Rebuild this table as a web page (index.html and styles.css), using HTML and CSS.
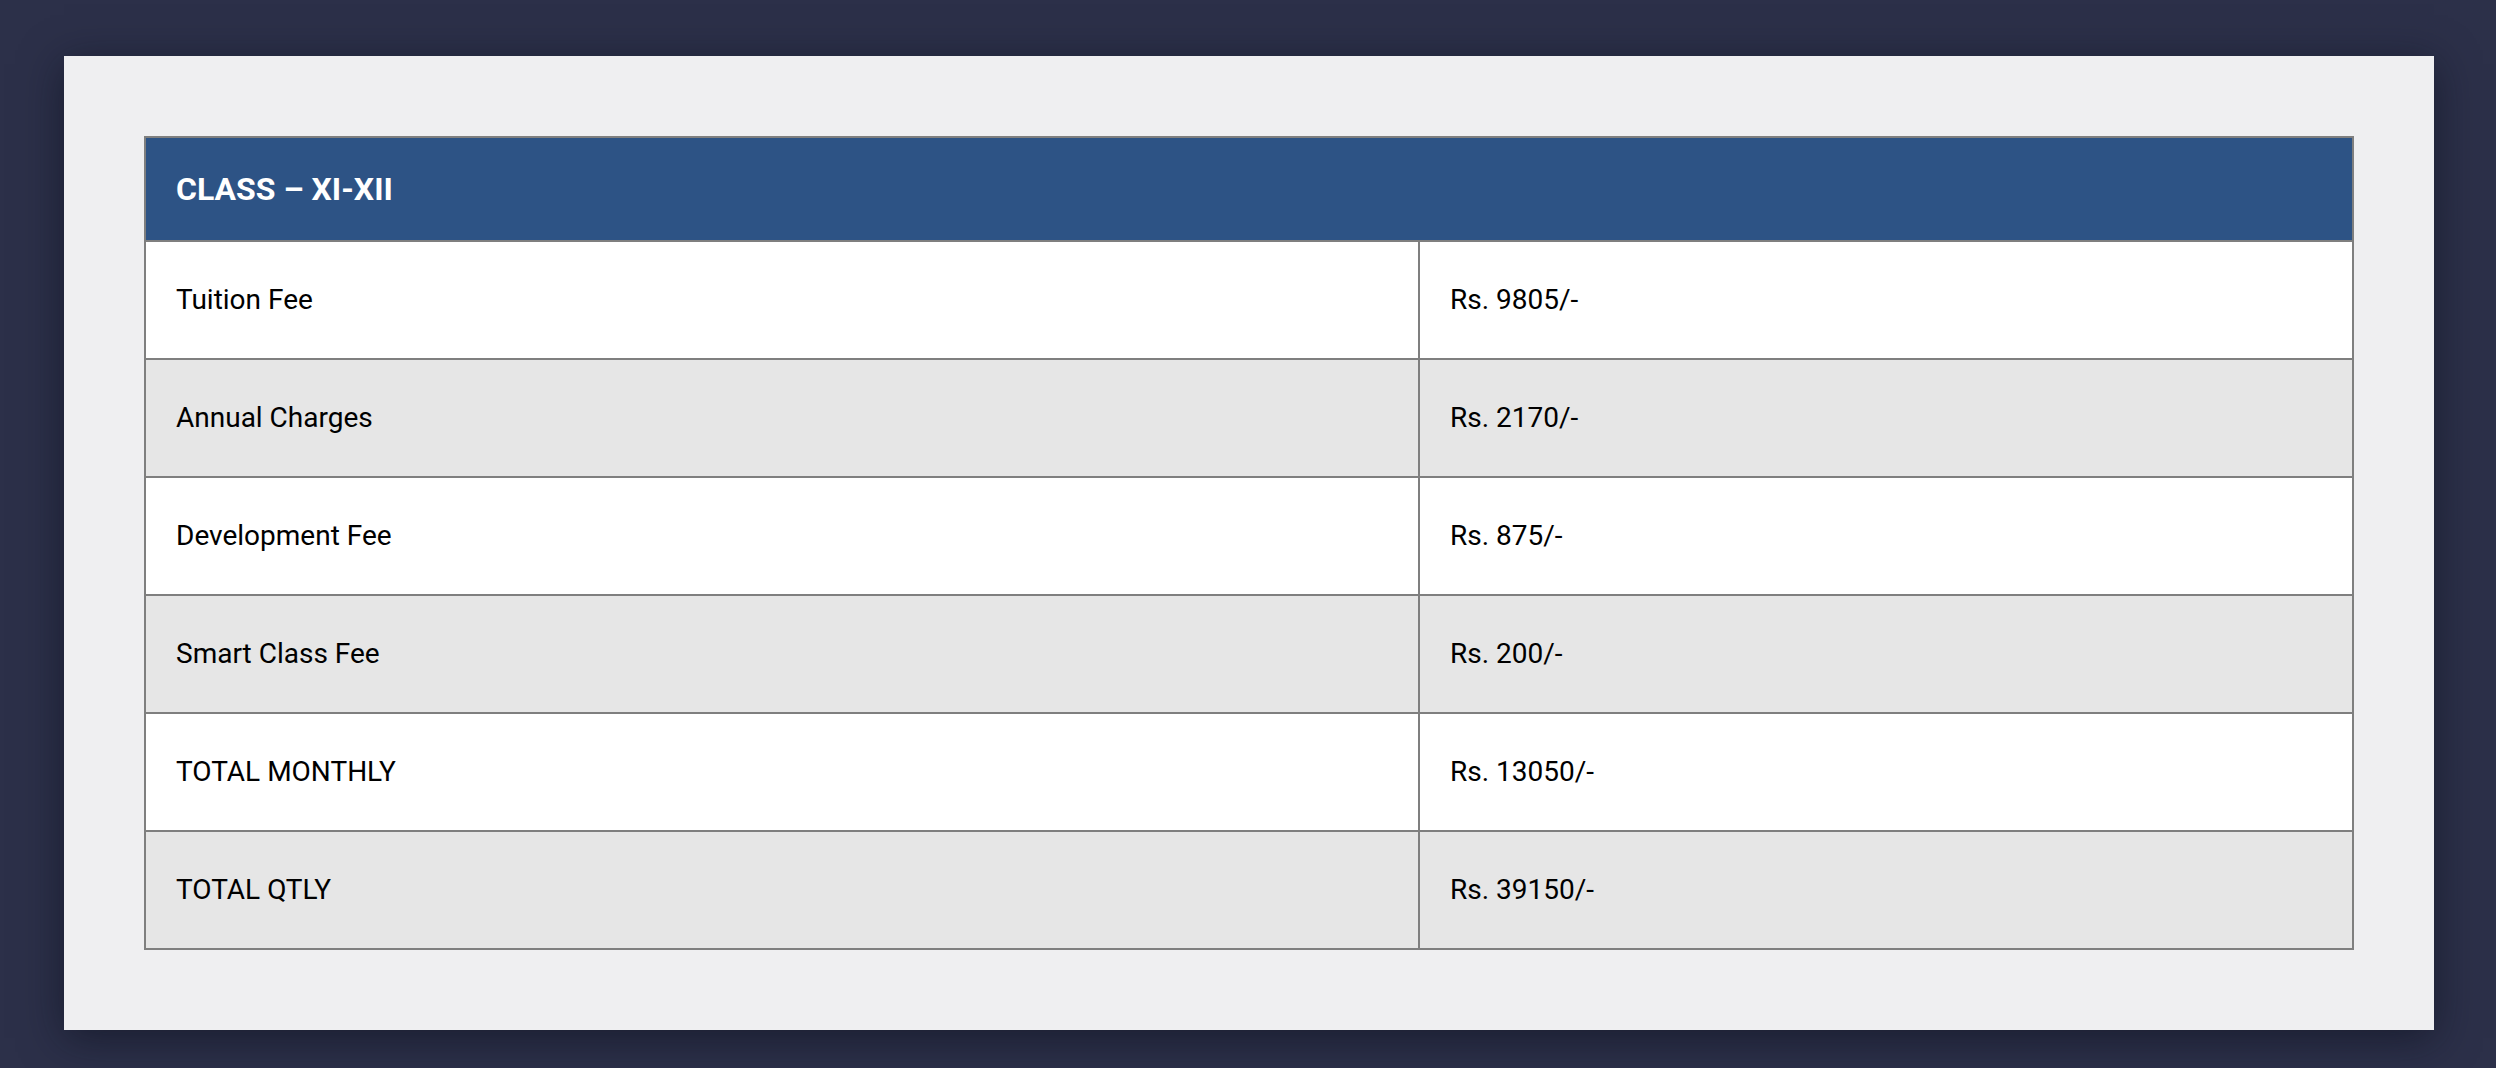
FILE: index.html
```html
<!DOCTYPE html>
<html lang="en">
<head>
<meta charset="utf-8">
<title>Fee Structure</title>
<link rel="stylesheet" href="styles.css">
</head>
<body>
<div class="page">
  <section class="card">
    <table class="fees">
      <colgroup>
        <col class="col-label">
        <col class="col-value">
      </colgroup>
      <thead>
        <tr><th colspan="2">CLASS – XI-XII</th></tr>
      </thead>
      <tbody>
        <tr><td>Tuition Fee</td><td>Rs. 9805/-</td></tr>
        <tr><td>Annual Charges</td><td>Rs. 2170/-</td></tr>
        <tr><td>Development Fee</td><td>Rs. 875/-</td></tr>
        <tr><td>Smart Class Fee</td><td>Rs. 200/-</td></tr>
        <tr><td>TOTAL MONTHLY</td><td>Rs. 13050/-</td></tr>
        <tr><td>TOTAL QTLY</td><td>Rs. 39150/-</td></tr>
      </tbody>
    </table>
  </section>
</div>
</body>
</html>
```

FILE: styles.css
```css
html, body {
  margin: 0;
  padding: 0;
  background: #2c3049;
  font-family: Roboto, "Liberation Sans", sans-serif;
}

.page {
  padding: 56px 62px 38px 64px;
}

.card {
  background: #efeff1;
  padding: 80px;
  box-shadow: 0 8px 40px rgba(10, 12, 25, 0.55);
}

.fees {
  width: 100%;
  border-collapse: collapse;
  border: 2px solid #7f7f7f;
  table-layout: fixed;
}

.col-label { width: 57.7%; }

.fees th {
  background: #2d5385;
  color: #ffffff;
  text-align: left;
  font-size: 32px;
  font-weight: 700;
  line-height: 36px;
  padding: 33px 30px;
  border: 2px solid #7f7f7f;
}

.fees td {
  font-size: 28px;
  line-height: 36px;
  color: #000000;
  padding: 40px 30px;
  border: 2px solid #7f7f7f;
  background: #ffffff;
}

.fees tbody tr:nth-child(even) td {
  background: #e6e6e6;
}
```
